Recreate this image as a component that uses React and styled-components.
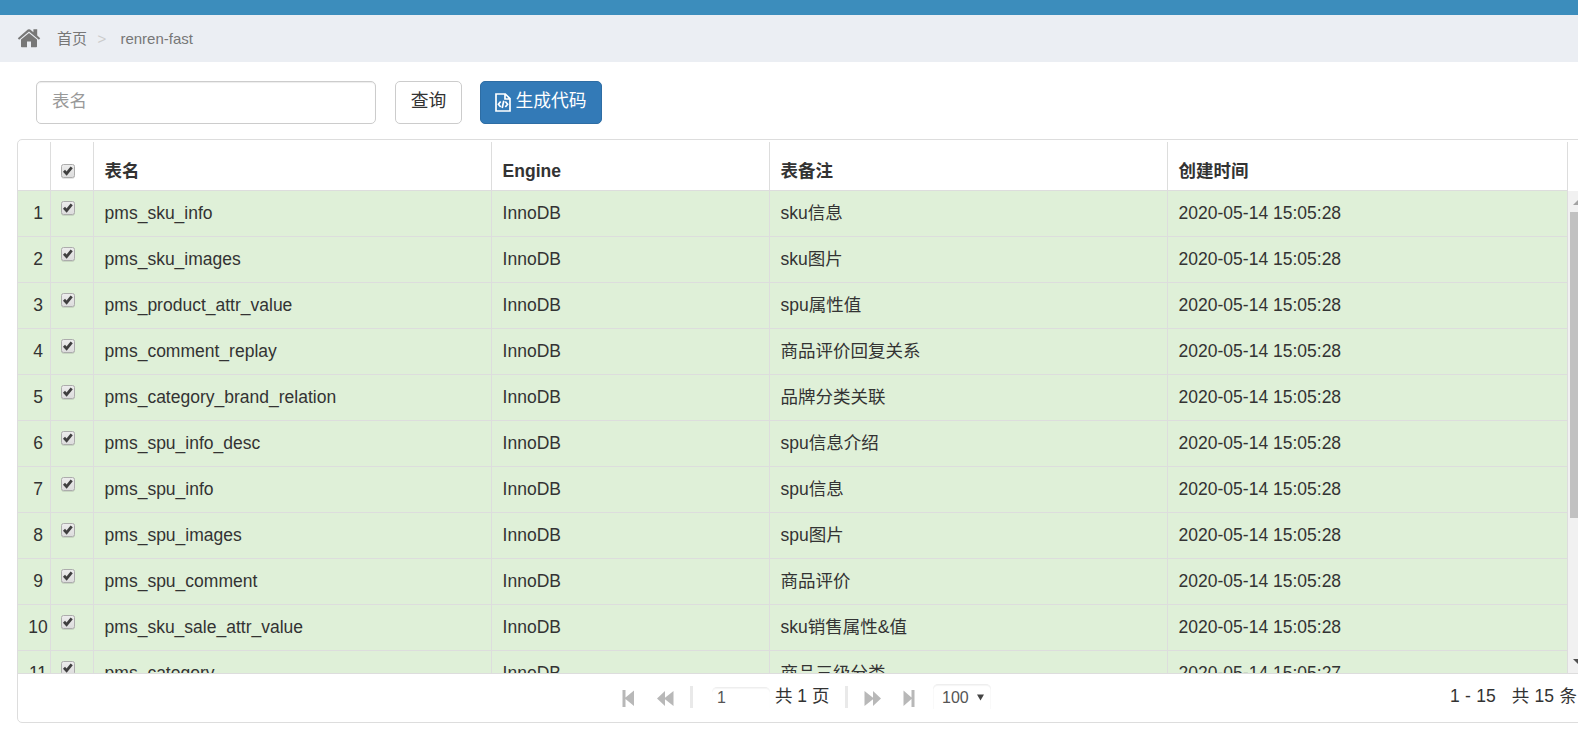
import React from "react";
import styled, { createGlobalStyle, css } from "styled-components";

const LINE = "#dddddd";

const GlobalStyle = createGlobalStyle`
  *, *::before, *::after { box-sizing: border-box; }
  body {
    margin: 0;
    overflow: hidden;
    background: #fff;
    color: #333;
    font: 17.5px/25px "Liberation Sans", Arial, "Noto Sans CJK SC", sans-serif;
  }
`;

const Page = styled.div`
  height: 732px;
  overflow: hidden;
  display: flex;
  flex-direction: column;
`;

const TopBar = styled.div`
  height: 15px;
  flex: none;
  background: #3c8dbc;
`;

const Breadcrumb = styled.nav`
  height: 47px;
  flex: none;
  display: flex;
  align-items: center;
  padding-left: 17px;
  background: #ebeef3;
  color: #777;
  font-size: 15px;
  line-height: 22px;
`;

const HomeIcon = styled.svg`
  width: 24px;
  height: 20px;
  margin: 0 16px 2px 0;
  fill: #777;
`;

const Separator = styled.span`
  width: 33.4px;
  padding-left: 10.5px;
  color: #ccc;
`;

const Toolbar = styled.div`
  flex: none;
  height: 77px;
  display: flex;
  align-items: flex-start;
  padding: 19px 0 0 36px;
`;

const SearchInput = styled.input`
  width: 340px;
  height: 43px;
  padding: 0 15px 2px;
  border: 1px solid #ccc;
  border-radius: 5px;
  box-shadow: inset 0 1px 1px rgba(0, 0, 0, 0.075);
  font: inherit;
  color: #555;
  outline: none;
  &::placeholder { color: #999; opacity: 1; }
`;

const Button = styled.button`
  width: ${(p) => p.$w}px;
  height: 43px;
  display: flex;
  align-items: center;
  justify-content: center;
  padding: 0 0 2px;
  margin-left: 19px;
  border: 1px solid #ccc;
  border-radius: 5px;
  background: #fff;
  color: #333;
  font: inherit;
  font-size: 17.8px;
  white-space: nowrap;
  ${(p) => p.$primary && css`
    margin-left: 18px;
    background: #337ab7;
    border-color: #2e6da4;
    color: #fff;
  `}
`;

const CodeIcon = styled.svg`
  width: 16px;
  height: 19px;
  margin: 1px 4px 0 0;
  fill: none;
  stroke: currentColor;
  stroke-width: 1.7;
`;

const Grid = styled.section`
  width: 1600px;
  height: 584px;
  flex: none;
  margin-left: 17px;
  border: 1px solid ${LINE};
  border-radius: 5px;
  display: flex;
  flex-direction: column;
`;

const columns = css`
  display: grid;
  grid-template-columns: 33px 43px 398px 278px 398px 400px;
`;

const HeaderRow = styled.div`
  ${columns}
  height: 51px;
  flex: none;
  padding-top: 2px;
  width: 1550px;
  box-shadow: inset 0 -1px 0 ${LINE};
`;

const HeaderCell = styled.div`
  padding: 17px 10px 0 10.6px;
  border-right: 1px solid ${LINE};
  font-weight: 700;
`;

const BodyArea = styled.div`
  height: 482px;
  flex: none;
  display: flex;
  overflow: hidden;
`;

const Rows = styled.div`
  width: 1550px;
  flex: none;
`;

const Row = styled.div`
  ${columns}
  height: 46px;
  background: #dff0d8;
`;

const Cell = styled.div`
  padding: ${(p) => (p.$number ? "10px 0 0 8px" : "10px 10px 0 10.6px")};
  text-align: ${(p) => (p.$number ? "center" : "left")};
  border-right: 1px solid ${LINE};
  border-bottom: 1px solid ${LINE};
  white-space: nowrap;
`;

const CheckCell = styled(Cell)`
  padding: 10px 0 0 10px;
  line-height: 0;
`;

const CheckHeader = styled(HeaderCell)`
  padding: 22px 0 0 10px;
  line-height: 0;
`;

const CheckSvg = styled.svg`
  width: 14px;
  height: 15px;
`;

const Scrollbar = styled.div`
  width: 21px;
  flex: none;
  background: #f1f1f1;
  display: flex;
  flex-direction: column;
  align-items: center;
`;

const Thumb = styled.div`
  width: 17px;
  height: 306px;
  background: #c1c1c1;
`;

const ScrollArrow = styled.svg`
  width: 21px;
  height: 21px;
  margin-top: ${(p) => (p.$down ? "auto" : 0)};
  fill: ${(p) => (p.$down ? "#505050" : "#a3a3a3")};
`;

const Pager = styled.footer`
  height: 49px;
  border-top: 1px solid ${LINE};
  display: flex;
  padding-left: 604px;
`;

const PagerIcon = styled.svg`
  width: ${(p) => p.$w}px;
  height: 17px;
  margin: 16px ${(p) => p.$gap}px 0 0;
  fill: #b8b8b8;
`;

const Divider = styled.span`
  width: 3px;
  height: 22px;
  margin: 12px ${(p) => p.$gap}px 0 0;
  background: #e9e9e9;
`;

const PageField = styled.div`
  width: 58px;
  height: 21px;
  margin: 13px 5px 0 0;
  padding: 0 0 0 5px;
  border-top: 1px solid #eee;
  border-radius: 5px 5px 0 0;
  box-shadow: inset 0 1px 1px rgba(0, 0, 0, 0.04);
  font-size: 16px;
  line-height: 20px;
  color: #555;
`;

const PageTotal = styled.span`
  width: 70px;
  padding-top: 10px;
  white-space: nowrap;
`;

const PageSize = styled.div`
  width: 58px;
  height: 25px;
  margin: 10px 0 0;
  padding: 1px 7px 0 9px;
  display: flex;
  justify-content: space-between;
  align-items: center;
  border-top: 1px solid #eee;
  border-radius: 5px 5px 0 0;
  box-shadow: inset 0 1px 1px rgba(0, 0, 0, 0.04), inset 1px 0 0 #fafafa, inset -1px 0 0 #fafafa;
  font-size: 16px;
  color: #555;
`;

const Caret = styled.svg`
  width: 7px;
  height: 7px;
  margin-bottom: 1px;
  fill: #444;
`;

const Range = styled.div`
  margin-left: 459px;
  padding-top: 10px;
  display: flex;
  gap: 16px;
  word-spacing: 0.5px;
  white-space: nowrap;
`;

const tables = [
  ["pms_sku_info", "sku信息", "28"],
  ["pms_sku_images", "sku图片", "28"],
  ["pms_product_attr_value", "spu属性值", "28"],
  ["pms_comment_replay", "商品评价回复关系", "28"],
  ["pms_category_brand_relation", "品牌分类关联", "28"],
  ["pms_spu_info_desc", "spu信息介绍", "28"],
  ["pms_spu_info", "spu信息", "28"],
  ["pms_spu_images", "spu图片", "28"],
  ["pms_spu_comment", "商品评价", "28"],
  ["pms_sku_sale_attr_value", "sku销售属性&值", "28"],
  ["pms_category", "商品三级分类", "27"],
];

function Check() {
  return (
    <CheckSvg viewBox="0 0 14 15">
      <defs>
        <linearGradient id="checkFill" x1="0" y1="0" x2="0" y2="1">
          <stop offset="0" stopColor="#ededed" />
          <stop offset="1" stopColor="#dcdcdc" />
        </linearGradient>
      </defs>
      <rect x="0.5" y="1.5" width="13" height="13" rx="2" fill="none" stroke="#000" strokeOpacity="0.1" />
      <rect x="0.5" y="0.5" width="13" height="13" rx="2" fill="url(#checkFill)" stroke="#acacac" />
      <path d="M3 6.8 L5.6 9.6 L10.7 3.4" fill="none" stroke="#3f3f3f" strokeWidth="2.8" />
    </CheckSvg>
  );
}

export default function App() {
  return (
    <>
      <GlobalStyle />
      <Page>
        <TopBar />
        <Breadcrumb>
          <HomeIcon viewBox="0 0 24 20">
            <path d="M12 5 L20 11.6 V18.4 Q20 19.2 19.2 19.2 H14 V13.4 H10 V19.2 H4.8 Q4 19.2 4 18.4 V11.6 Z" />
            <path d="M0.8 10.2 L10.8 1.6 Q12 0.7 13.2 1.6 L16.4 4.3 V1.3 H20.2 V7.6 L23.2 10.2 L21.9 11.7 L12 3.5 L2.1 11.7 Z" />
          </HomeIcon>
          <span>首页</span>
          <Separator>&gt;</Separator>
          <span>renren-fast</span>
        </Breadcrumb>
        <Toolbar>
          <SearchInput placeholder="表名" />
          <Button $w={67}>查询</Button>
          <Button $w={122} $primary>
            <CodeIcon viewBox="0 0 16 19">
              <path d="M1 1 H10.3 L15 5.7 V18 H1 Z M10 1 V6 H15" />
              <path d="M5.7 8.5 L3.4 11.3 L5.7 14 M10.3 8.5 L12.6 11.3 L10.3 14 M8.8 7.8 L7.2 15" />
            </CodeIcon>
            生成代码
          </Button>
        </Toolbar>
        <Grid>
          <HeaderRow>
            <HeaderCell />
            <CheckHeader><Check /></CheckHeader>
            <HeaderCell>表名</HeaderCell>
            <HeaderCell>Engine</HeaderCell>
            <HeaderCell>表备注</HeaderCell>
            <HeaderCell>创建时间</HeaderCell>
          </HeaderRow>
          <BodyArea>
            <Rows>
              {tables.map(([name, note, sec], i) => (
                <Row key={name}>
                  <Cell $number>{i + 1}</Cell>
                  <CheckCell><Check /></CheckCell>
                  <Cell>{name}</Cell>
                  <Cell>InnoDB</Cell>
                  <Cell>{note}</Cell>
                  <Cell>2020-05-14 15:05:{sec}</Cell>
                </Row>
              ))}
            </Rows>
            <Scrollbar>
              <ScrollArrow viewBox="0 0 21 21"><path d="M5 14 L10.5 8.5 L16 14 Z" /></ScrollArrow>
              <Thumb />
              <ScrollArrow $down viewBox="0 0 21 21"><path d="M5 7 L10.5 12.5 L16 7 Z" /></ScrollArrow>
            </Scrollbar>
          </BodyArea>
          <Pager>
            <PagerIcon $w={12} $gap={23} viewBox="0 0 12 17"><path d="M0.5 0 H3.5 V7.5 L12 0.5 V16 L3.5 9 V17 H0.5 Z" /></PagerIcon>
            <PagerIcon $w={17} $gap={16} viewBox="0 0 17 17"><path d="M0 8.5 L8 1 V7.8 L16.5 1 V16 L8 9.2 V16 Z" /></PagerIcon>
            <Divider $gap={19} />
            <PageField>1</PageField>
            <PageTotal>共 1 页</PageTotal>
            <Divider $gap={16} />
            <PagerIcon $w={17} $gap={22} viewBox="0 0 17 17"><path d="M17 8.5 L9 1 V7.8 L0.5 1 V16 L9 9.2 V16 Z" /></PagerIcon>
            <PagerIcon $w={12} $gap={18} viewBox="0 0 12 17"><path d="M11.5 0 H8.5 V7.5 L0.5 0.5 V16 L8.5 9 V17 H11.5 Z" /></PagerIcon>
            <PageSize>100<Caret viewBox="0 0 8 7"><path d="M0 0 H8 L4 7 Z" /></Caret></PageSize>
            <Range><span>1 - 15</span><span>共 15 条</span></Range>
          </Pager>
        </Grid>
      </Page>
    </>
  );
}
